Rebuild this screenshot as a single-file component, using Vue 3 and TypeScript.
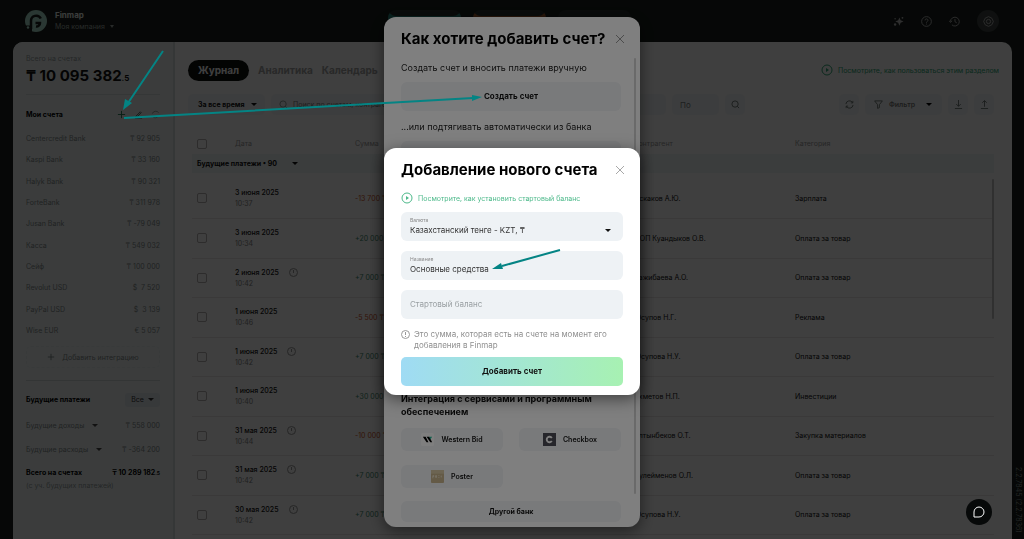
<script setup lang="ts">
import { ref } from 'vue'

interface Account { name: string; amount: string }
interface Payment { date: string; time: string; planned: boolean; sum: string; party: string; category: string }

const accounts: Account[] = [
  { name: 'Centercredit Bank', amount: '₸ 92 905' },
  { name: 'Kaspi Bank', amount: '₸ 33 160' },
  { name: 'Halyk Bank', amount: '₸ 90 321' },
  { name: 'ForteBank', amount: '₸ 311 978' },
  { name: 'Jusan Bank', amount: '₸ -79 049' },
  { name: 'Касса', amount: '₸ 549 032' },
  { name: 'Сейф', amount: '₸ 100 000' },
  { name: 'Revolut USD', amount: '$  7 520' },
  { name: 'PayPal USD', amount: '$  3 139' },
  { name: 'Wise EUR', amount: '€ 5 057' },
]

const payments: Payment[] = [
  { date: '3 июня 2025', time: '10:37', planned: false, sum: '-13 700 ₸', party: 'Искаков А.Ю.', category: 'Зарплата' },
  { date: '3 июня 2025', time: '10:34', planned: false, sum: '+20 000 ₸', party: 'ФОП Куандыков О.В.', category: 'Оплата за товар' },
  { date: '2 июня 2025', time: '10:42', planned: true, sum: '+7 000 ₸', party: 'Кажибаева А.О.', category: 'Оплата за товар' },
  { date: '1 июня 2025', time: '10:46', planned: false, sum: '-5 500 ₸', party: 'Юсупов Н.Г.', category: 'Реклама' },
  { date: '1 июня 2025', time: '10:42', planned: true, sum: '+7 000 ₸', party: 'Юсупова Н.У.', category: 'Оплата за товар' },
  { date: '1 июня 2025', time: '10:40', planned: false, sum: '+30 000 ₸', party: 'Ахметов Н.П.', category: 'Инвестиции' },
  { date: '31 мая 2025', time: '10:44', planned: true, sum: '-10 000 ₸', party: 'Алтынбеков О.Т.', category: 'Закупка материалов' },
  { date: '31 мая 2025', time: '10:42', planned: true, sum: '+7 000 ₸', party: 'Сулейменов О.Л.', category: 'Оплата за товар' },
  { date: '30 мая 2025', time: '10:42', planned: true, sum: '+7 000 ₸', party: 'Юсупова Н.У.', category: 'Оплата за товар' },
]

const title = ref('Основные средства')
const balance = ref('')
</script>

<template>
  <div class="app">
    <header class="top">
      <svg class="logo" viewBox="0 0 22 22" aria-hidden="true">
        <circle cx="11" cy="11" r="11" fill="#a9ddcc" />
        <path d="M0 15.500h7V22H0z" fill="#181f1c" />
        <path d="M6 19v-8a5.200 5.200 0 0 1 9.800-2.500" fill="none" stroke="#181f1c" stroke-width="2.500" />
        <path d="M10.500 13h4.500a3.500 3.500 0 0 1-4 3.500" fill="none" stroke="#181f1c" stroke-width="2.500" />
        <circle cx="3" cy="17.500" r="1.200" fill="#a9ddcc" />
      </svg>
      <div class="brand">
        <strong>Finmap</strong>
        <button class="company">Моя компания <i class="caret"></i></button>
      </div>
      <div class="stats"><span class="teal"></span><span class="orange"></span><span></span></div>
      <nav class="tools">
        <button aria-label="Помощник">
          <svg viewBox="0 0 12 12" fill="#b8b8b8"><path d="M7 1.500l1.300 3.200 3.200 1.300-3.200 1.300L7 10.500 5.700 7.300 2.500 6l3.200-1.300z" /><circle cx="2.300" cy="9.300" r="1.300" /><circle cx="2.300" cy="3" r=".8" /><circle cx="10.300" cy="2" r="1" /></svg>
        </button>
        <button aria-label="Помощь">
          <svg viewBox="0 0 12 12" fill="none" stroke="#b8b8b8"><circle cx="6" cy="6" r="5.300" /><path d="M4.400 4.800a1.600 1.600 0 1 1 2.400 1.300C6 6.500 6 6.800 6 7.300M6 8.300v1" /></svg>
        </button>
        <button aria-label="История">
          <svg viewBox="0 0 12 12" fill="none" stroke="#b8b8b8"><path d="M1.600 6a4.800 4.800 0 1 1 1.600 3.700M0 5l1.600 2L3.400 5.200M6.500 3.300V6.200l2 1.300" /></svg>
        </button>
        <button class="round" aria-label="Настройки">
          <svg viewBox="0 0 12 12" fill="none" stroke="#b8b8b8"><path d="M4.300 1.500L6 .700l1.700.8 1.900.900.900 1.900.8 1.700-.8 1.700-.9 1.900-1.900.9-1.700.8-1.700-.8-1.900-.9-.9-1.900L.700 6l.8-1.700.9-1.900z" /><circle cx="6" cy="6" r="2.300" /></svg>
        </button>
      </nav>
    </header>

    <div class="workspace">
      <aside class="side">
        <div class="muted overline">Всего на счетах</div>
        <div class="total">₸ 10 095 382<small>.5</small></div>
        <div class="side-head">
          <strong>Мои счета</strong>
          <span class="side-icons">
            <button aria-label="Добавить счет"><svg viewBox="0 0 10 10" stroke="#1f7a50"><path d="M5 1v8M1 5h8" /></svg></button>
            <button aria-label="Изменить"><svg viewBox="0 0 10 10" fill="none" stroke="#44665a"><path d="M2 7l5-5 1 1-5 5H2zM1 9h8" /></svg></button>
            <button aria-label="Обновить"><svg viewBox="0 0 10 10" fill="none" stroke="#8a9a96"><path d="M1.500 4a4 4 0 0 1 7-1M8.500 6a4 4 0 0 1-7 1" /></svg></button>
          </span>
        </div>
        <ul class="accounts">
          <li v-for="a in accounts" :key="a.name"><span>{{ a.name }}</span><span class="amount">{{ a.amount }}</span></li>
        </ul>
        <button class="integrate">
          <svg viewBox="0 0 10 10" stroke="#707878"><path d="M5 1v8M1 5h8" /></svg>Добавить интеграцию
        </button>
        <div class="future-head">
          <strong>Будущие платежи</strong>
          <button class="all">Все <i class="caret"></i></button>
        </div>
        <div class="future"><button>Будущие доходы <i class="caret"></i></button><span>₸ 558 000</span></div>
        <div class="future"><button>Будущие расходы <i class="caret"></i></button><span>₸ -364 200</span></div>
        <div class="sum-all"><span>Всего на счетах</span><span>₸ 10 289 182<small>.5</small></span></div>
        <div class="muted note">(с уч. будущих платежей)</div>
      </aside>

      <main class="main">
        <div class="tabs">
          <button class="active">Журнал</button>
          <button>Аналитика</button>
          <button>Календарь</button>
          <a href="#" class="guide">
            <svg viewBox="0 0 12 12"><circle cx="6" cy="6" r="5" fill="none" stroke="#2fa876" /><path d="M5 4v4l3-2z" fill="#2fa876" /></svg>
            Посмотрите, как пользоваться этим разделом
          </a>
        </div>
        <div class="filters">
          <button class="chip period">За все время <i class="caret"></i></button>
          <label class="chip search">
            <svg viewBox="0 0 10 10" fill="none" stroke="#889494"><circle cx="4.500" cy="4.500" r="3.500" /><path d="M7 7l2 2" /></svg>
            <input type="search" placeholder="Поиск по счетам, контрагентам" aria-label="Поиск" />
          </label>
          <input class="chip upto" placeholder="По" aria-label="Сумма по" />
          <button class="chip square" aria-label="Найти">
            <svg viewBox="0 0 10 10" fill="none" stroke="#66706e"><circle cx="4.500" cy="4.500" r="3.500" /><path d="M7 7l2 2" /></svg>
          </button>
          <span class="grow"></span>
          <button class="chip square" aria-label="Обновить">
            <svg viewBox="0 0 10 10" fill="none" stroke="#66706e"><path d="M1 4.500A4 4 0 0 1 8.500 3M9 5.500A4 4 0 0 1 1.500 7M8.700 1v2.200H6.500M1.300 9V6.800h2.200" /></svg>
          </button>
          <button class="chip filter">
            <svg viewBox="0 0 10 10" fill="none" stroke="#66706e"><path d="M.700 1h8.600L6 5.200V8.500L4 9.300V5.200z" /></svg>
            <span>Фильтр</span><i class="caret"></i>
          </button>
          <button class="chip square" aria-label="Скачать">
            <svg viewBox="0 0 10 10" fill="none" stroke="#66706e"><path d="M5 0v7M2.500 4.500L5 7l2.500-2.500M1 9.500h8" /></svg>
          </button>
          <button class="chip square" aria-label="Загрузить">
            <svg viewBox="0 0 10 10" fill="none" stroke="#66706e"><path d="M5 7.500V.700M2.500 3L5 .700 7.500 3M1 9.500h8" /></svg>
          </button>
        </div>

        <div class="table-wrap">
          <table>
            <colgroup><col class="c-check" /><col class="c-date" /><col class="c-sum" /><col class="c-party" /><col /></colgroup>
            <thead>
              <tr>
                <th><input type="checkbox" aria-label="Выбрать все" /></th>
                <th>Дата</th><th>Сумма</th><th>Контрагент</th><th>Категория</th>
              </tr>
            </thead>
            <tbody>
              <tr class="group"><td colspan="5"><button>Будущие платежи • 90 <i class="caret"></i></button></td></tr>
              <tr class="gap"><td colspan="5"></td></tr>
              <tr v-for="(p, i) in payments" :key="i" class="row">
                <td><input type="checkbox" :aria-label="p.date + ' ' + p.time" /></td>
                <td>
                  <div class="date">{{ p.date }}
                    <svg v-if="p.planned" viewBox="0 0 9 9" fill="none" stroke="#999"><circle cx="4.500" cy="4.500" r="4" /><path d="M4.500 2v3" /></svg>
                  </div>
                  <div class="time">{{ p.time }}</div>
                </td>
                <td :class="p.sum.startsWith('-') ? 'minus' : 'plus'">{{ p.sum }}</td>
                <td>{{ p.party }}</td>
                <td>{{ p.category }}</td>
              </tr>
            </tbody>
          </table>
          <span class="thumb"></span>
        </div>
      </main>
    </div>
    <span class="version">2.2.7845 (2.2.7836)</span>

    <div class="overlay">
      <section class="modal choose" role="dialog" aria-label="Как хотите добавить счет?">
        <div class="modal-head">
          <h2>Как хотите добавить счет?</h2>
          <button class="close" aria-label="Закрыть"><svg viewBox="0 0 8 8" stroke="#999"><path d="M0 0l8 8M8 0L0 8" /></svg></button>
        </div>
        <div class="scroller">
          <p>Создать счет и вносить платежи вручную</p>
          <button class="tile wide">Создать счет</button>
          <p>...или подтягивать автоматически из банка</p>
          <input class="tile wide" type="search" aria-label="Банк" />
          <h3>Интеграция с сервисами и программным обеспечением</h3>
          <div class="services">
            <button class="tile">
              <svg viewBox="0 0 14 14"><rect width="14" height="14" rx="2" fill="#fff" /><path d="M2 4h3l3 6H6zM6 4h3l3 6h-2z" /><path d="M9 4h3l-2 3z" fill="#2b9" /></svg>Western Bid
            </button>
            <button class="tile">
              <svg viewBox="0 0 14 14"><rect width="14" height="14" fill="#4d4d56" /><path d="M9.500 5.300A3 3 0 1 0 9.500 8.700" fill="none" stroke="#fff" stroke-width="2" /></svg>Checkbox
            </button>
            <button class="tile">
              <svg viewBox="0 0 14 14"><rect width="14" height="14" rx="1" fill="#c8b48c" /><path d="M0 0h14v4H0z" fill="#d8c8a4" /><path d="M2 6v3M2 6h1v1H2M5 6h1v2H5zM8 8h1M9 6H8M11 6v2" fill="none" stroke="#eee4cc" /></svg>Poster
            </button>
          </div>
          <button class="tile wide other">Другой банк</button>
          <span class="thumb"></span>
        </div>
      </section>
    </div>

    <div class="overlay">
      <form class="modal create" role="dialog" aria-label="Добавление нового счета" @submit.prevent>
        <div class="modal-head">
          <h2>Добавление нового счета</h2>
          <button type="button" class="close" aria-label="Закрыть"><svg viewBox="0 0 8 8" stroke="#a8a8a8"><path d="M0 0l8 8M8 0L0 8" /></svg></button>
        </div>
        <a href="#" class="guide">
          <svg viewBox="0 0 12 12"><circle cx="6" cy="6" r="5" fill="none" stroke="#4cb98a" /><path d="M5 4v4l3-2z" fill="#4cb98a" /></svg>
          Посмотрите, как установить стартовый баланс
        </a>
        <div class="field">
          <label for="currency">Валюта</label>
          <div class="pick">
            <select id="currency"><option>Казахстанский тенге - KZT, ₸</option></select>
            <i class="caret"></i>
          </div>
        </div>
        <div class="field">
          <label for="title">Название</label>
          <input id="title" v-model="title" />
        </div>
        <div class="field">
          <input v-model="balance" placeholder="Стартовый баланс" aria-label="Стартовый баланс" />
        </div>
        <div class="hint">
          <svg viewBox="0 0 9 9" fill="none" stroke="#999"><circle cx="4.500" cy="4.500" r="4" /><path d="M4.500 2v3M4.500 6v1" /></svg>
          <span>Это сумма, которая есть на счете на момент его добавления в Finmap</span>
        </div>
        <button class="submit">Добавить счет</button>
      </form>
    </div>

    <svg class="arrows" viewBox="0 0 1024 539" fill="#048484" stroke="#048484" aria-hidden="true">
      <path d="M163 51L128 103M124 118L473 98M560 250L502 266" stroke-width="2" />
      <path d="M123 110L125 99L132 103zM482 97L472 101V95zM492 269L501 263L503 269z" stroke="none" />
    </svg>
    <button class="chat" aria-label="Чат">
      <svg viewBox="0 0 12 12" fill="none" stroke="#fff"><path d="M1 11V6a5 5 0 1 1 5 5z" /></svg>
    </button>
  </div>
</template>

<style>
html, body { margin: 0; background: #060807; }
</style>

<style scoped>
.app, .app * { box-sizing: border-box; }
.app {
  position: relative;
  display: flex;
  flex-direction: column;
  height: 100vh;
  overflow: hidden;
  background: #181f1c;
  color: #111;
  font: 7px/11px Inter, "Noto Sans", sans-serif;
}
button, input, select { font: inherit; color: inherit; background: none; border: 0; margin: 0; padding: 0; outline: 0; }
button { cursor: pointer; white-space: nowrap; }
a { text-decoration: none; }
svg { flex: none; display: block; }
strong { font-weight: 700; }
.caret { display: inline-block; flex: none; border: 3px solid transparent; border-top-color: currentColor; border-bottom: 0; }

.top { position: relative; flex: none; height: 42px; display: flex; align-items: center; padding: 0 25px; }
.logo { width: 22px; height: 22px; }
.brand { margin-left: 8px; display: flex; flex-direction: column; color: #e8f0ec; }
.brand strong { font-size: 8px; }
.company { color: #a0a8a4; display: flex; align-items: center; gap: 5px; }
.company .caret { border-width: 3px 2px 0; }
.stats { position: absolute; top: 10px; left: 50%; margin-left: -124px; display: flex; gap: 12px; }
.stats span { width: 73px; height: 22px; border-radius: 8px; background: #262e2c; }
.stats .teal { box-shadow: inset 0 -16px #2a8b80; }
.stats .orange { box-shadow: inset 0 -16px #a65a2c; }
.tools { margin-left: auto; display: flex; align-items: center; gap: 17px; }
.tools svg { width: 11px; height: 11px; }
.tools .round { width: 22px; height: 22px; border-radius: 50%; background: #3c4240; display: grid; place-items: center; }

.workspace { flex: 1; min-height: 0; display: flex; margin: 0 12px 0 13px; border-radius: 10px 10px 0 0; overflow: hidden; background: #fcfcfc; }
.side { flex: none; width: 162px; padding: 11px 13px 0; background: #edf3f3; border-right: 2px solid #d4dcdc; color: #838a8a; }
.side strong, .sum-all { color: #000; }
.muted { color: #959d9d; }
.total { font-size: 15px; line-height: 24px; font-weight: 700; color: #111; white-space: nowrap; }
.total small { font-size: 8px; }
.side-head { display: flex; justify-content: space-between; align-items: center; height: 34px; margin-top: 4px; border-top: 1px solid #d6dddd; padding-top: 5px; }
.side-head strong { font-size: 7px; }
.side-icons { display: flex; gap: 8px; }
.side-icons svg { width: 9px; height: 9px; }
.accounts { list-style: none; margin: 0; padding: 0; display: grid; grid-auto-rows: 1fr; height: 213px; }
.accounts li { display: flex; justify-content: space-between; align-items: center; }
.amount { white-space: pre; }
.integrate { display: flex; align-items: center; justify-content: center; gap: 7px; width: 100%; height: 22px; margin-top: 5px; border: 1px dashed #e2e9e9; border-radius: 5px; }
.integrate svg { width: 8px; height: 8px; }
.future-head { display: flex; justify-content: space-between; align-items: center; height: 31px; margin-top: 12px; border-top: 1px solid #ccd4d4; padding-top: 7px; }
.all { width: 35px; height: 14px; border-radius: 3px; background: #dfe5e9; color: #333; display: flex; align-items: center; justify-content: center; gap: 4px; }
.future { display: flex; justify-content: space-between; align-items: center; height: 24px; }
.future-head + .future { margin-top: 2px; }
.future button { display: flex; align-items: center; gap: 8px; }
.future .caret { color: #444; }
.sum-all { display: flex; justify-content: space-between; height: 23px; align-items: center; font-weight: 700; }
.sum-all small { font-size: 5px; }
.note { margin-top: -4px; }

.main { flex: 1; min-width: 0; padding: 17px 13px 0 13px; display: flex; flex-direction: column; }
.tabs { display: flex; align-items: center; height: 22px; font-size: 10px; font-weight: 700; color: #a2a2a2; gap: 9px; }
.tabs .active { width: 61px; height: 21px; border-radius: 11px; background: #0c100e; color: #fff; }
.guide { display: flex; align-items: center; gap: 5px; color: #4cb98a; font-size: 7px; font-weight: 400; white-space: nowrap; }
.guide svg { width: 12px; height: 12px; }
.tabs .guide { margin-left: auto; color: #2fa876; }
.filters { display: flex; gap: 6px; margin: 13px 5px 0 0; height: 21px; }
.chip { height: 21px; border-radius: 5px; background: #f3f7f8; display: flex; align-items: center; }
.period { width: 77px; padding-left: 10px; gap: 6px; font-weight: 700; }
.search { flex: 0 1 395px; padding-left: 8px; gap: 5px; color: #aaa; }
.search input { flex: 1; min-width: 0; }
.filters svg { width: 9px; height: 9px; }
.upto { flex: none; width: 47px; padding-left: 8px; font-size: 8px; }
.upto::placeholder, .search input::placeholder { color: #757d7d; opacity: 1; }
.square { flex: none; width: 20px; justify-content: center; }
.grow { flex: 1; }
.filter { flex: none; width: 77px; padding: 0 10px 0 9px; gap: 6px; font-weight: 600; color: #777; }
.filter .caret { margin-left: auto; color: #000; }

.table-wrap { position: relative; margin: 18px 5px 0 4px; }
table { width: 100%; table-layout: fixed; border-collapse: collapse; }
.c-check { width: 43px; }
.c-date { width: 120px; }
.c-sum { width: 279px; }
.c-party { width: 161px; }
th, td { padding: 0; text-align: left; vertical-align: middle; white-space: nowrap; }
th { height: 21px; font-weight: 400; color: #999; }
th:first-child, .row td:first-child { padding-left: 5px; }
input[type="checkbox"] { appearance: none; display: block; width: 10px; height: 10px; border: 1px solid #b4b0b0; border-radius: 2px; }
.group td { height: 19px; background: #eef4f5; padding-left: 5px; font-weight: 700; }
.group button { display: flex; align-items: center; gap: 15px; }
.gap td { height: 6px; }
.row td { height: 39px; border-bottom: 1px solid #e8e4e4; font-weight: 400; }
.row:nth-child(even) td { height: 40px; }
.date { display: flex; align-items: center; gap: 10px; font-weight: 500; }
.date svg { width: 9px; height: 9px; }
.time { color: #858585; }
.row .minus { color: #cf5426; }
.row .plus { color: #3f8a6c; }
.thumb { position: absolute; width: 2px; border-radius: 1px; }
.table-wrap .thumb { top: 46px; right: 0; height: 140px; background: #c2c2c2; }
.version { position: absolute; right: 0; bottom: 6px; writing-mode: vertical-rl; color: #8b9390; }

.overlay { position: fixed; inset: 0; display: flex; align-items: center; justify-content: center; padding-top: 4px; background: rgba(0, 0, 0, 0.5); }
.modal { width: 25%; min-width: 256px; border-radius: 12px; background: #fff; box-shadow: 0 4px 16px rgba(0, 0, 0, 0.5); padding: 0 17px; }
.modal-head { display: flex; justify-content: space-between; align-items: center; height: 44px; margin-right: -1px; }
h2 { margin: 0; font-size: 15px; line-height: 20px; font-weight: 700; color: #000; white-space: nowrap; }
.close svg { width: 8px; height: 8px; }
.choose { height: 510px; display: flex; flex-direction: column; padding-right: 4px; }
.choose .modal-head { margin-right: 12px; }
.scroller { position: relative; flex: 1; display: flex; flex-direction: column; padding-right: 15px; }
.scroller p { margin: 0 0 8px; font-size: 9px; line-height: 13px; color: #222; }
.scroller .tile + p { margin-top: 9px; }
.tile { display: flex; align-items: center; justify-content: center; gap: 7px; height: 23px; border-radius: 6px; background: #f2f4f6; font-weight: 600; color: #111; }
.tile svg { width: 13px; height: 13px; }
.tile.wide { flex: none; width: 100%; height: 29px; font-size: 8px; font-weight: 700; }
h3 { margin: auto 0 10px; font-size: 9px; line-height: 13px; font-weight: 700; }
.services { display: grid; grid-template-columns: 1fr 1fr; gap: 14px 16px; }
.tile.other { height: 21px; margin: 13px 0 5px; font-size: 7px; }
.scroller .thumb { top: -3px; right: 0; bottom: 33px; background: #d4d4d4; }

.create { padding-bottom: 9px; }
.create .guide { height: 12px; margin-bottom: 8px; }
.field { display: flex; flex-direction: column; justify-content: center; height: 29px; margin-bottom: 10px; padding: 0 9px; border-radius: 6px; background: #eef2f5; font-size: 8px; color: #333; }
.field label { font-size: 5px; line-height: 7px; color: #888; }
.field input, .field select { width: 100%; height: 13px; line-height: 13px; appearance: none; }
.field input::placeholder { color: #9aa0a3; opacity: 1; }
.pick { display: flex; align-items: center; padding-right: 3px; }
.pick .caret { color: #111; }
.hint { display: flex; gap: 4px; margin: 10px 0 6px; font-size: 8px; line-height: 11px; color: #8f8f8f; }
.hint svg { width: 9px; height: 9px; margin-top: 1px; }
.submit { display: block; width: 100%; height: 29px; border-radius: 5px; background: linear-gradient(90deg, #9fdbf4, #a7f1b2); font-size: 8px; font-weight: 700; color: #111; }

.arrows { position: absolute; inset: 0; width: 100%; height: 100%; pointer-events: none; }
.chat { position: fixed; right: 32px; bottom: 14px; width: 26px; height: 26px; border-radius: 50%; background: #070909; display: grid; place-items: center; }
.chat svg { width: 12px; height: 12px; }
</style>
